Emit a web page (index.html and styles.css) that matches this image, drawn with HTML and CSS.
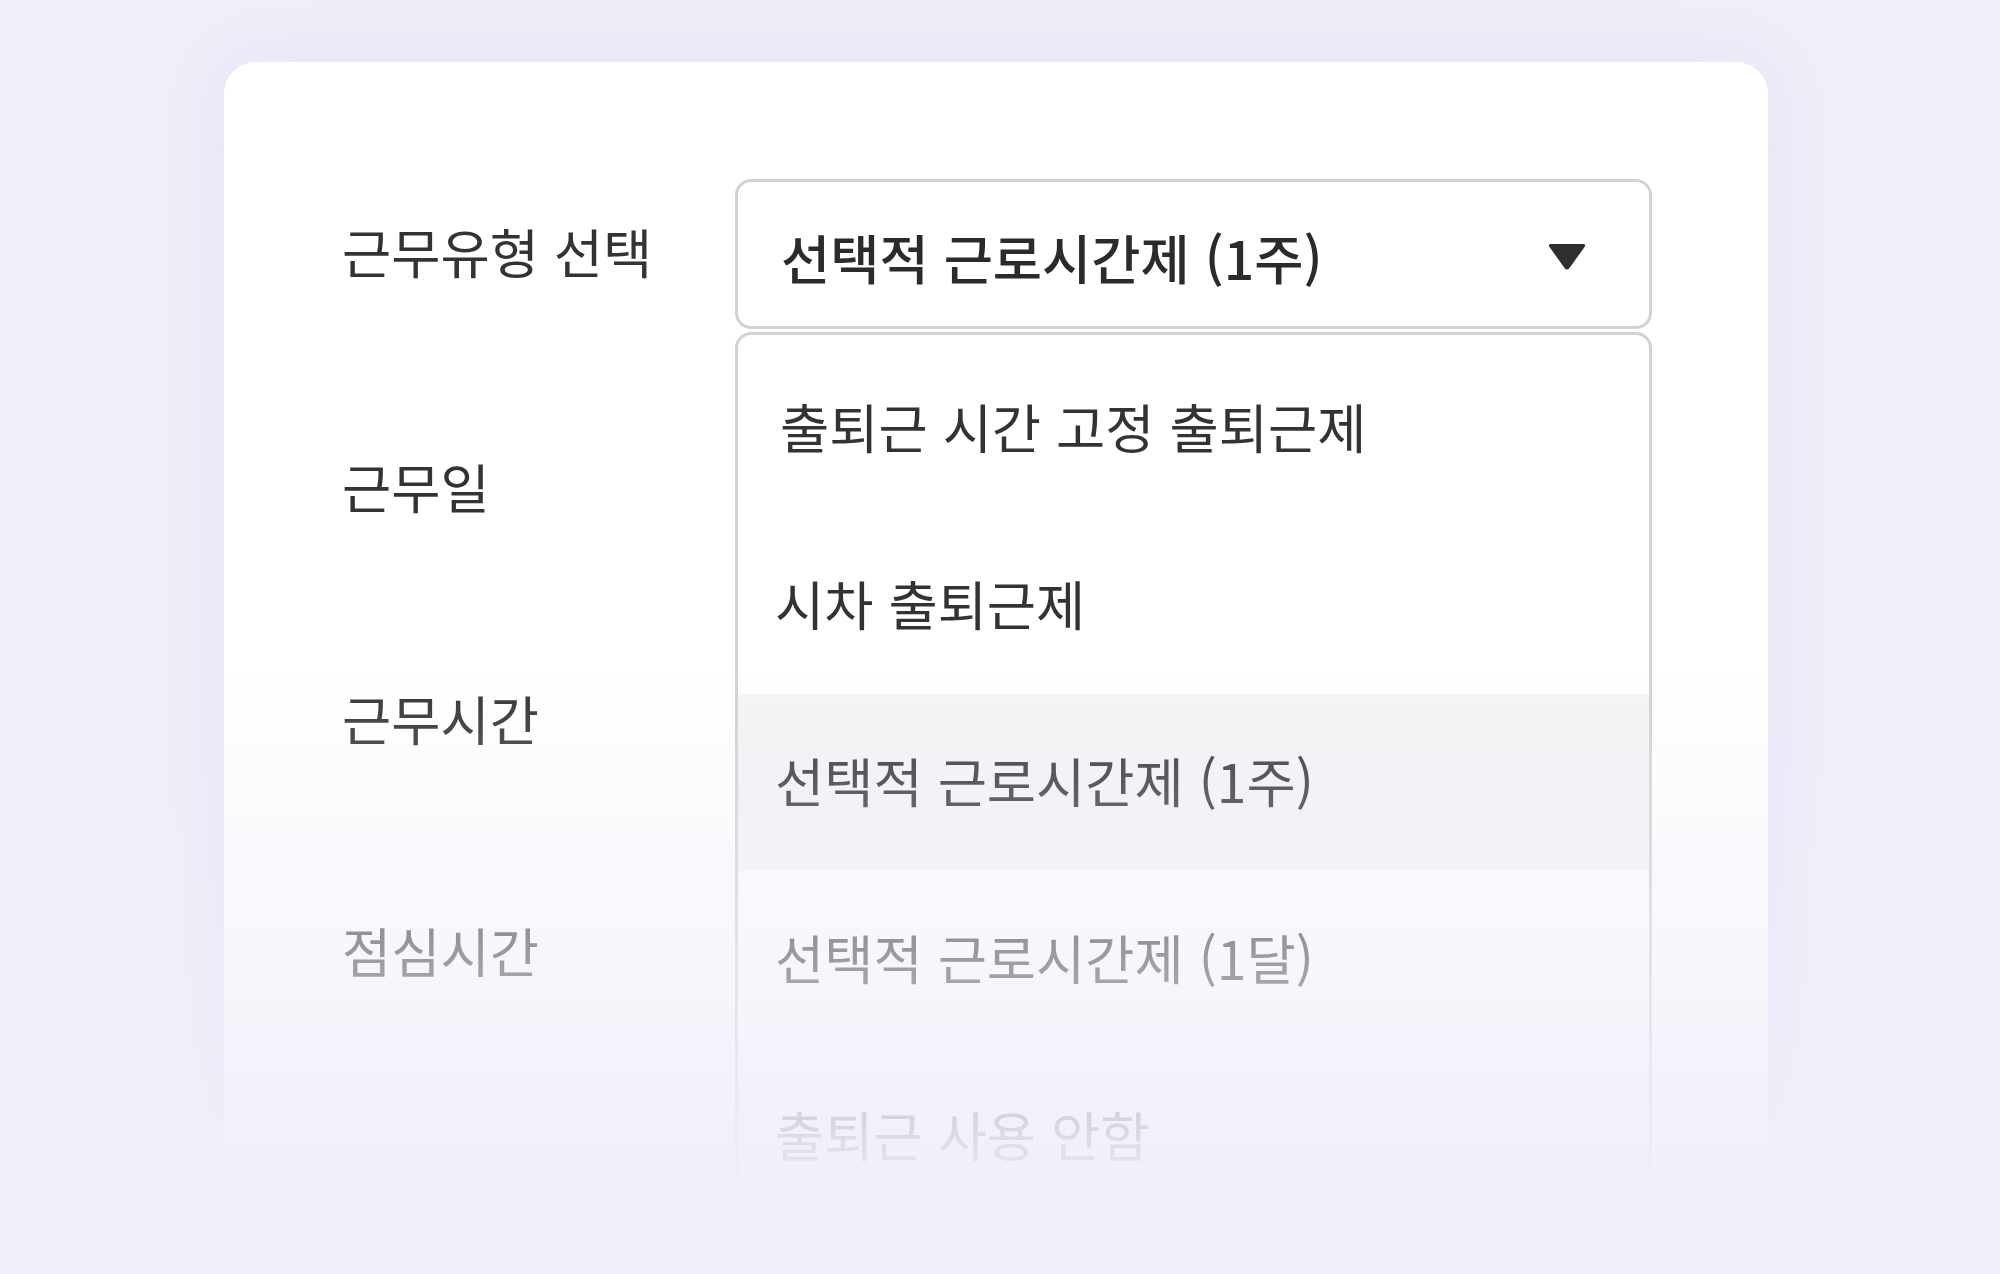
FILE: index.html
```html
<!DOCTYPE html>
<html lang="ko">
<head>
<meta charset="utf-8">
<title>근무유형 선택</title>
<link rel="stylesheet" href="styles.css">
</head>
<body>
<div class="page">
  <section class="card">
    <div class="labels">
      <div class="label label--head">근무유형 선택</div>
      <div class="label-rest">
        <div class="label">근무일</div>
        <div class="label">근무시간</div>
        <div class="label">점심시간</div>
      </div>
    </div>
    <div class="field">
      <div class="select">
        <span class="select-value">선택적 근로시간제 (1주)</span>
        <svg class="select-arrow" width="40" height="30" viewBox="0 0 40 30">
          <path d="M4 2 H36 Q39.5 2 37.5 5 L22.5 26 Q20 29 17.5 26 L2.5 5 Q0.5 2 4 2 Z" fill="#2f2f2f"/>
        </svg>
      </div>
      <ul class="menu">
        <li class="option option--first">출퇴근 시간 고정 출퇴근제</li>
        <li class="option">시차 출퇴근제</li>
        <li class="option option--active">선택적 근로시간제 (1주)</li>
        <li class="option">선택적 근로시간제 (1달)</li>
        <li class="option">출퇴근 사용 안함</li>
      </ul>
    </div>
  </section>
  <div class="fade"></div>
</div>
</body>
</html>
```

FILE: styles.css
```css
* { box-sizing: border-box; }

html, body {
  margin: 0;
  padding: 0;
}

body {
  width: 2000px;
  height: 1274px;
  overflow: hidden;
  background: #efeffa;
  font-family: "Noto Sans CJK KR", "Noto Sans", sans-serif;
  color: #333333;
}

.page {
  position: relative;
  width: 2000px;
  height: 1274px;
  padding: 62px 0 0 224px;
}

.card {
  width: 1544px;
  height: 1150px;
  background: #ffffff;
  border-radius: 32px;
  box-shadow: 0 0 70px rgba(120, 120, 200, 0.10);
  padding: 117px 116px 0 118px;
  display: flex;
  overflow: hidden;
}

.labels {
  width: 393px;
  flex: none;
  display: flex;
  flex-direction: column;
}

.label {
  font-size: 53.5px;
  line-height: 64px;
  height: 64px;
  white-space: nowrap;
  color: #333333;
}

.label--head {
  height: 150px;
  line-height: 144px;
}

.label-rest {
  padding-top: 125px;
  display: flex;
  flex-direction: column;
  gap: 168px;
}

.field {
  flex: 1;
  display: flex;
  flex-direction: column;
  min-width: 0;
}

.select {
  flex: none;
  height: 150px;
  border: 3px solid #d2d2d2;
  border-radius: 16px;
  display: flex;
  align-items: center;
  justify-content: space-between;
  padding: 4px 62px 0 43px;
}

.select-value {
  font-size: 53.5px;
  font-weight: 500;
  color: #2b2b2b;
  white-space: nowrap;
}

.select-arrow {
  display: block;
  margin-top: 2px;
}

.menu {
  list-style: none;
  margin: 3px 0 0 0;
  padding: 5px 0 0 0;
  flex: 1;
  min-height: 0;
  border: 3px solid #d2d2d2;
  border-bottom: none;
  border-radius: 16px 16px 0 0;
}

.option {
  height: 177px;
  display: flex;
  align-items: center;
  padding: 0 0 6px 37px;
  font-size: 53.5px;
  color: #333333;
  white-space: nowrap;
}

.option--first {
  padding-left: 42px;
}

.option--active {
  background: #f4f4f6;
}

.fade {
  position: absolute;
  left: 0;
  top: 0;
  width: 2000px;
  height: 1274px;
  pointer-events: none;
  background: linear-gradient(to bottom,
    rgba(239, 239, 250, 0) 0px,
    rgba(239, 239, 250, 0) 670px,
    rgba(239, 239, 250, 0.55) 955px,
    rgba(239, 239, 250, 0.9) 1140px,
    rgba(239, 239, 250, 1) 1210px,
    rgba(239, 239, 250, 1) 1274px);
}
```
